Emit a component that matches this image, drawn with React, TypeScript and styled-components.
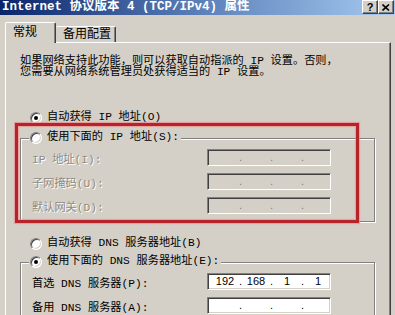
import React from 'react';
import styled, { createGlobalStyle } from 'styled-components';

const FACE = '#d4d0c8';
const UI_FONT = `"Liberation Mono", "Noto Sans CJK SC", monospace`;

const GlobalStyle = createGlobalStyle`
	html, body {
		margin: 0;
		padding: 0;
	}
	body {
		width: 395px;
		height: 315px;
		overflow: hidden;
		background: ${FACE};
	}
`;

type Field = { label: string; value?: string[] };

const ipFields: Field[] = [
	{ label: 'IP 地址(I):' },
	{ label: '子网掩码(U):' },
	{ label: '默认网关(D):' },
];

const dnsFields: Field[] = [
	{ label: '首选 DNS 服务器(P):', value: ['192', '168', '1', '1'] },
	{ label: '备用 DNS 服务器(A):', value: ['', '', '', ''] },
];

const IpInput = ({ value, disabled }: { value?: string[]; disabled?: boolean }) => {
	const parts = value ?? ['', '', '', ''];
	return (
		<IpBox $disabled={disabled}>
			{parts.map((p, i) => (
				<React.Fragment key={i}>
					<Segment>{p}</Segment>
					{i < 3 && <Dot>.</Dot>}
				</React.Fragment>
			))}
		</IpBox>
	);
};

const Radio = ({ checked, children }: { checked?: boolean; children: React.ReactNode }) => (
	<>
		<RadioDot $checked={checked} />
		<RadioText>{children}</RadioText>
	</>
);

const App = () => {
	return (
		<Dialog>
			<GlobalStyle />
			<TitleBar>
				<Title>Internet 协议版本 4 (TCP/IPv4) 属性</Title>
				<Buttons>
					<CaptionButton>?</CaptionButton>
					<CaptionButton>
						<svg width='8' height='7' viewBox='0 0 8 7'>
							<path d='M0.5 0.5 L7 6.5 M7 0.5 L0.5 6.5' stroke='#000' strokeWidth='1.6' />
						</svg>
					</CaptionButton>
				</Buttons>
			</TitleBar>

			<TabStrip>
				<Tab $active>常规</Tab>
				<Tab>备用配置</Tab>
			</TabStrip>

			<Panel>
				<Intro>
					如果网络支持此功能，则可以获取自动指派的 IP 设置。否则，
					<br />
					您需要从网络系统管理员处获得适当的 IP 设置。
				</Intro>

				<RadioRow $top={33}>
					<Radio checked>自动获得 IP 地址(O)</Radio>
				</RadioRow>

				<GroupBox $top={14}>
					<Legend>
						<Radio>使用下面的 IP 地址(S):</Radio>
					</Legend>
					<FieldGrid>
						{ipFields.map((f) => (
							<React.Fragment key={f.label}>
								<FieldLabel $disabled>{f.label}</FieldLabel>
								<IpInput disabled />
							</React.Fragment>
						))}
					</FieldGrid>
				</GroupBox>

				<RadioRow $top={15}>
					<Radio>自动获得 DNS 服务器地址(B)</Radio>
				</RadioRow>

				<GroupBox $top={12}>
					<Legend>
						<Radio checked>使用下面的 DNS 服务器地址(E):</Radio>
					</Legend>
					<FieldGrid>
						{dnsFields.map((f) => (
							<React.Fragment key={f.label}>
								<FieldLabel>{f.label}</FieldLabel>
								<IpInput value={f.value} />
							</React.Fragment>
						))}
					</FieldGrid>
				</GroupBox>

				<Highlight />
			</Panel>
		</Dialog>
	);
};

export default App;

const Dialog = styled.div`
	width: 395px;
	height: 315px;
	overflow: hidden;
	background: ${FACE};
	font-family: ${UI_FONT};
	font-size: 11.2px;
	color: #000;
`;

const TitleBar = styled.div`
	display: flex;
	justify-content: space-between;
	align-items: flex-start;
	height: 15px;
	padding: 0 1px 0 2px;
	background: linear-gradient(to right, #0a246a 0%, #5a7fb8 50%, #a6caf0 100%);
`;

const Title = styled.div`
	color: #fff;
	font-weight: bold;
	font-size: 12.5px;
	line-height: 14px;
	white-space: nowrap;
`;

const Buttons = styled.div`
	display: flex;
`;

const CaptionButton = styled.div`
	box-sizing: border-box;
	width: 16px;
	height: 14px;
	display: flex;
	align-items: center;
	justify-content: center;
	background: ${FACE};
	border: 1px solid;
	border-color: #fff #404040 #404040 #fff;
	box-shadow: inset -1px -1px 0 #808080;
	font: bold 11px 'Liberation Sans', sans-serif;
	color: #000;
`;

const TabStrip = styled.div`
	position: relative;
	z-index: 1;
	display: flex;
	align-items: flex-end;
	height: 20px;
	margin-top: 7px;
	padding-left: 5px;
`;

const Tab = styled.div<{ $active?: boolean }>`
	box-sizing: border-box;
	height: ${({ $active }) => ($active ? '21px' : '16px')};
	margin-bottom: ${({ $active }) => ($active ? '-1px' : '0')};
	width: ${({ $active }) => ($active ? '51px' : '60px')};
	padding: ${({ $active }) => ($active ? '4px 0 0 7px' : '2px 0 0 7px')};
	background: ${FACE};
	border-top: 1px solid #fff;
	border-left: ${({ $active }) => ($active ? '1px solid #fff' : 'none')};
	border-right: 1px solid #404040;
	box-shadow: inset -1px 0 0 #808080;
	border-radius: 2px 2px 0 0;
	font-size: 12px;
	line-height: 12px;
	white-space: nowrap;
`;

const Panel = styled.div`
	position: relative;
	box-sizing: border-box;
	width: 386px;
	height: 300px;
	margin-left: 5px;
	border-top: 1px solid #fff;
	border-left: 1px solid #fff;
	border-right: 1px solid #404040;
	box-shadow: inset -1px 0 0 #808080;
`;

const Intro = styled.p`
	margin: 13px 0 0 14px;
	line-height: 11px;
	white-space: nowrap;
`;

const RadioRow = styled.div<{ $top: number }>`
	display: flex;
	align-items: center;
	height: 13px;
	margin-top: ${({ $top }) => $top}px;
	padding-left: 24px;
`;

const RadioDot = styled.span<{ $checked?: boolean }>`
	box-sizing: border-box;
	flex: none;
	width: 12px;
	height: 12px;
	display: flex;
	align-items: center;
	justify-content: center;
	border-radius: 50%;
	border: 1px solid;
	border-color: #808080 #fff #fff #808080;
	box-shadow: inset 1px 1px 0 #404040, inset -1px -1px 0 ${FACE};
	background: #fff;
	&::after {
		content: '';
		display: ${({ $checked }) => ($checked ? 'block' : 'none')};
		width: 4px;
		height: 4px;
		border-radius: 50%;
		background: #000;
	}
`;

const RadioText = styled.span`
	margin-left: 5px;
	line-height: 13px;
	white-space: nowrap;
`;

const GroupBox = styled.div<{ $top: number }>`
	box-sizing: border-box;
	width: 355px;
	margin: ${({ $top }) => $top}px 0 0 14px;
	padding-bottom: 7px;
	border: 1px solid #808080;
	box-shadow: inset 1px 1px 0 #fff, 1px 1px 0 #fff;
`;

const Legend = styled.div`
	display: flex;
	align-items: center;
	width: fit-content;
	height: 13px;
	margin: -8px 0 0 8px;
	padding: 0 2px 0 1px;
	background: ${FACE};
`;

const FieldGrid = styled.div`
	display: grid;
	grid-template-columns: 175px 124px;
	grid-auto-rows: 17px;
	row-gap: 7px;
	align-items: center;
	margin-top: 5px;
	padding-left: 11px;
`;

const FieldLabel = styled.span<{ $disabled?: boolean }>`
	white-space: nowrap;
	color: ${({ $disabled }) => ($disabled ? '#8e8b85' : '#000')};
	text-shadow: ${({ $disabled }) => ($disabled ? '1px 1px 0 #fff' : 'none')};
`;

const IpBox = styled.div<{ $disabled?: boolean }>`
	box-sizing: border-box;
	width: 124px;
	height: 17px;
	display: grid;
	grid-template-columns: 28px 3px 28px 3px 28px 3px 28px;
	align-items: center;
	padding-left: 3px;
	border: 1px solid;
	border-color: #808080 #fff #fff #808080;
	box-shadow: inset 1px 1px 0 #404040, inset -1px -1px 0 ${FACE};
	background: ${({ $disabled }) => ($disabled ? FACE : '#fff')};
	color: ${({ $disabled }) => ($disabled ? '#808080' : '#000')};
	font: 11px/15px 'Liberation Sans', sans-serif;
`;

const Segment = styled.span`
	text-align: center;
`;

const Dot = styled.span`
	text-align: center;
`;

// red annotation frame drawn over the static-IP group
const Highlight = styled.div`
	position: absolute;
	left: 9px;
	top: 80px;
	width: 344px;
	height: 100px;
	box-sizing: border-box;
	border: 3px solid #b8232a;
	box-shadow: 0 0 1px 1px rgba(235, 140, 140, 0.7), inset 0 0 1px 1px rgba(235, 140, 140, 0.7);
	pointer-events: none;
`;
